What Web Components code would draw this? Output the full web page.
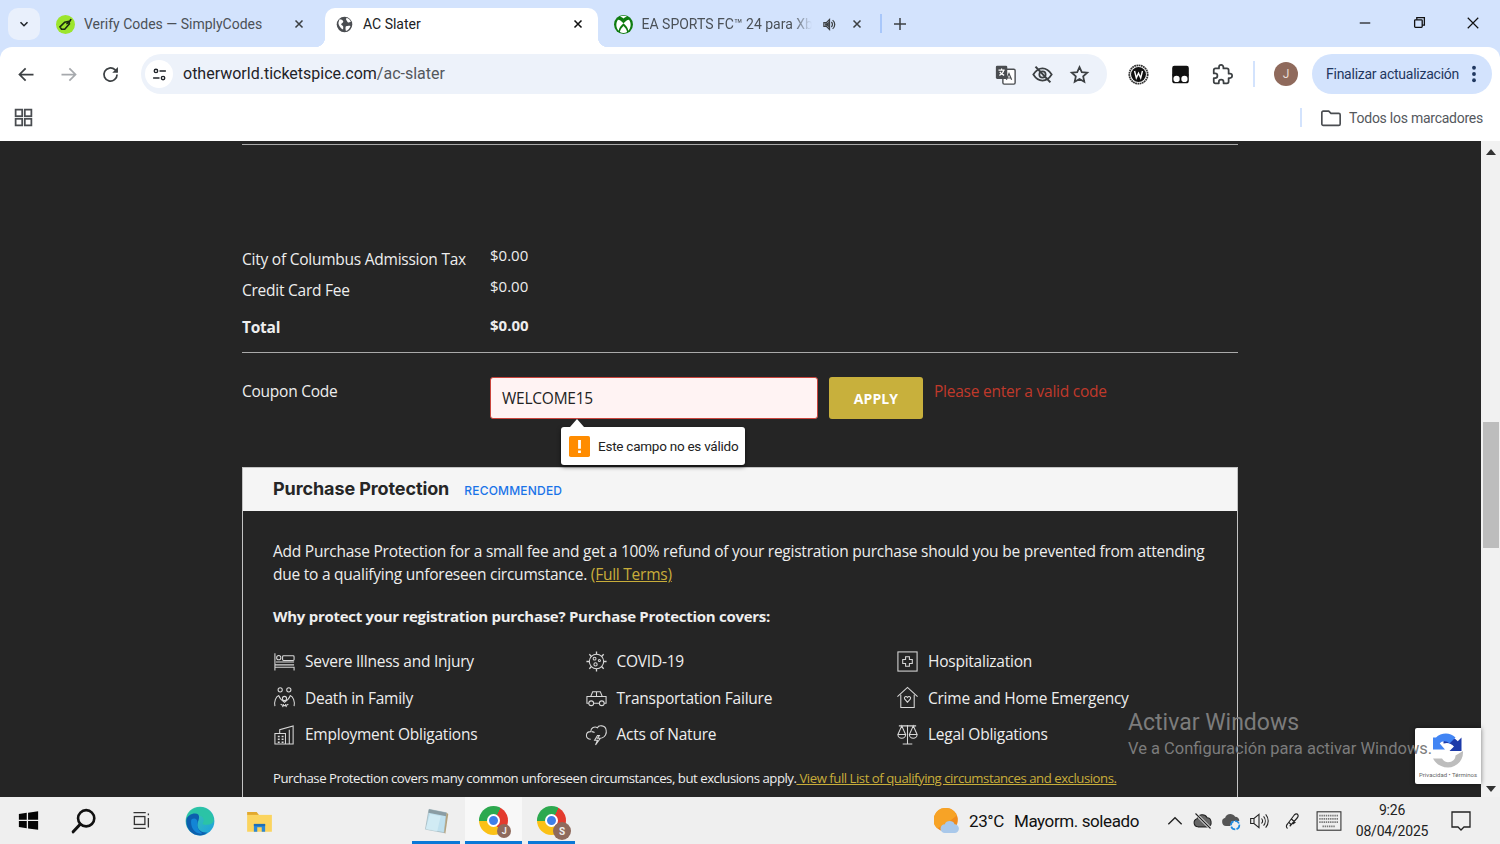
<!DOCTYPE html>
<html lang="es">
<head>
<meta charset="utf-8">
<title>AC Slater</title>
<style>
html,body{margin:0;padding:0;height:100%;overflow:hidden}
body{width:1500px;height:844px;display:flex;flex-direction:column;font-family:"Open Sans","Noto Sans",sans-serif;position:relative;background:#d3e3fd}
</style>
</head>
<body>
<tab-strip></tab-strip>
<tool-bar></tool-bar>
<bookmarks-bar></bookmarks-bar>
<page-view>
  <fee-row label="City of Columbus Admission Tax" value="$0.00" style="margin-top:103px;height:31px"></fee-row>
  <fee-row label="Credit Card Fee" value="$0.00" style="height:37px"></fee-row>
  <fee-row label="Total" value="$0.00" strong style="height:36px"></fee-row>
  <coupon-row></coupon-row>
  <protection-card>
    <coverage-item icon="bed">Severe Illness and Injury</coverage-item>
    <coverage-item icon="virus">COVID-19</coverage-item>
    <coverage-item icon="hospital">Hospitalization</coverage-item>
    <coverage-item icon="family">Death in Family</coverage-item>
    <coverage-item icon="car">Transportation Failure</coverage-item>
    <coverage-item icon="home">Crime and Home Emergency</coverage-item>
    <coverage-item icon="office">Employment Obligations</coverage-item>
    <coverage-item icon="storm">Acts of Nature</coverage-item>
    <coverage-item icon="scale">Legal Obligations</coverage-item>
  </protection-card>
</page-view>
<task-bar></task-bar>

<script>
"use strict";

// dibujos de los iconos, todos en un viewBox de 24
const ICONS = {
  back: '<path d="M20 12H5M11 5l-7 7 7 7" fill="none" stroke="#3c4043" stroke-width="2"/>',
  forward: '<path d="M4 12h15M13 5l7 7-7 7" fill="none" stroke="#a6a9ad" stroke-width="2"/>',
  reload: '<path d="M19.5 12a7.5 7.5 0 1 1-2.4-5.5L19.5 9" fill="none" stroke="#3c4043" stroke-width="2"/><path d="M20.5 3.5V10H14z" fill="#3c4043"/>',
  tune: '<g fill="none" stroke="#1f2328" stroke-width="2"><circle cx="7" cy="7" r="2.4"/><path d="M12 7h9M3 17h9"/><circle cx="17" cy="17" r="2.4"/></g>',
  close: '<path d="M6 6l12 12M18 6L6 18" fill="none" stroke="currentColor" stroke-width="2.6"/>',
  plus: '<path d="M12 4v16M4 12h16" fill="none" stroke="#3c4043" stroke-width="2"/>',
  chevron: '<path d="M6 9l6 6 6-6" fill="none" stroke="#1f2328" stroke-width="2.6"/>',
  globe: '<circle cx="12" cy="12" r="11" fill="#4a4d51"/><path d="M5 4.5c3 0 4 1 5 2.500s-1 3-2 3.500-1 2 1 3 1 4 1 5.500C6 17 3 12 3.500 9zM15 2.500c3 1 5 3 6 5.500l-3 1c-2 .5-2-1.500-3-2.500s-1-3 0-4zM14 14.500c2-1 5-1 6.500-.5-1 3-3 6-6.500 7-.5-2-1-5 0-6.500z" fill="#fff"/>',
  simply: '<circle cx="12" cy="12" r="12" fill="#9ce52d"/><path d="M5 15l6-6 5-1 1 3-6 7H7z" fill="none" stroke="#1c2b10" stroke-width="2"/><path d="M13 11c3-1 5-3 6-6" fill="none" stroke="#1c2b10" stroke-width="2"/>',
  xbox: '<circle cx="12" cy="12" r="12" fill="#107c10"/><path d="M12 10.500C9.500 8 7.500 6 5 6c-3.500 5-2 11 1 14 0-3 3-7 6-9.500zM12 10.500C14.500 8 16.500 6 19 6c3.500 5 2 11-1 14 0-3-3-7-6-9.500zM12 14c-2.500 2.500-4 4.500-4.500 7.500 3 1.500 6 1.500 9 0-.5-3-2-5-4.500-7.500zM7.500 2c3-1.500 6-1.500 9 0-1.500.3-3 1-4.500 2.500C10.500 3 9 2.300 7.500 2z" fill="#fff"/>',
  sound: '<path d="M3 9v6h4l5 5V4L7 9z" fill="none" stroke="#3c4043" stroke-width="2"/><path d="M5 10h3l3-3v10l-3-3H5z" fill="#3c4043"/><path d="M15 8a5.500 5.500 0 0 1 0 8M17 5a9 9 0 0 1 0 14" fill="none" stroke="#3c4043" stroke-width="2"/>',
  minimize: '<path d="M3 12h18" stroke="#111" stroke-width="2"/>',
  restore: '<g fill="none" stroke="#111" stroke-width="2.4"><rect x="3" y="7" width="14" height="14" rx="1.500"/><path d="M7 7V3h14v14h-4"/></g>',
  winclose: '<path d="M3 3l18 18M21 3L3 21" fill="none" stroke="#111" stroke-width="2"/>',
  translate: '<rect x="9" y="6" width="14" height="17" rx="1.500" fill="#fff" stroke="#4a4d51" stroke-width="1.600"/><rect x="1" y="2" width="13" height="15" rx="1.500" fill="#4a4d51"/><path d="M4 7h7M7.500 5v2M10 7c-.5 3-3 5-5 6M5.500 9c1 2 3 3 5 4" fill="none" stroke="#fff" stroke-width="1.300"/><path d="M13 18l3-7 3 7M14 16h4" fill="none" stroke="#4a4d51" stroke-width="1.400"/>',
  eyeoff: '<path d="M1.500 12C5 6.500 8 5 12 5s7 1.500 10.500 7C19 17.500 16 19 12 19s-7-1.500-10.500-7z" fill="none" stroke="#3c4043" stroke-width="2"/><circle cx="12" cy="12" r="3.600" fill="none" stroke="#3c4043" stroke-width="2"/><path d="M4 3l17 18" stroke="#3c4043" stroke-width="2.400"/>',
  star: '<path d="M12 3.500l2.600 5.800 6.300.7-4.700 4.200 1.300 6.200-5.500-3.200-5.500 3.200 1.300-6.200L3.100 10l6.300-.7z" fill="none" stroke="#3c4043" stroke-width="2"/>',
  wext: '<circle cx="12" cy="12" r="10.500" fill="#fff" stroke="#333" stroke-width="2" stroke-dasharray="2 .6"/><circle cx="12" cy="12" r="8.500" fill="#111"/><path d="M7.500 8l2 8 2.500-5.500 2.500 5.500 2-8" fill="none" stroke="#fff" stroke-width="1.600"/>',
  tamper: '<path d="M5 2h14a2.500 2.500 0 0 1 2.500 2.500V13h-19V4.500A2.500 2.500 0 0 1 5 2z" fill="#111"/><path d="M2.500 12h19v7a3 3 0 0 1-3 3H5.500a3 3 0 0 1-3-3z" fill="#111"/><circle cx="7.500" cy="17" r="3.600" fill="#fff"/><circle cx="16.500" cy="17" r="3.600" fill="#fff"/>',
  puzzle: '<path d="M20.500 11H19V7a2 2 0 0 0-2-2h-4V3.500a2.500 2.500 0 0 0-5 0V5H4a2 2 0 0 0-2 2v3.800h1.500a2.700 2.700 0 0 1 0 5.400H2V20a2 2 0 0 0 2 2h3.800v-1.500a2.700 2.700 0 0 1 5.400 0V22H17a2 2 0 0 0 2-2v-4h1.500a2.500 2.500 0 0 0 0-5z" fill="none" stroke="#3c4043" stroke-width="2" stroke-linejoin="round"/>',
  dots: '<g fill="#1f3760"><circle cx="12" cy="4.500" r="2.300"/><circle cx="12" cy="12" r="2.300"/><circle cx="12" cy="19.500" r="2.300"/></g>',
  apps: '<g fill="none" stroke="#4a4d51" stroke-width="2"><rect x="3" y="3" width="7.500" height="7.500"/><rect x="13.500" y="3" width="7.500" height="7.500"/><rect x="3" y="13.500" width="7.500" height="7.500"/><rect x="13.500" y="13.500" width="7.500" height="7.500"/></g>',
  folder: '<path d="M2 6a1.500 1.500 0 0 1 1.500-1.500h6L12 7h8.500A1.500 1.500 0 0 1 22 8.500v10a1.500 1.500 0 0 1-1.500 1.500h-17A1.500 1.500 0 0 1 2 18.500z" fill="none" stroke="#4a4d51" stroke-width="1.800"/>',
  bed: '<g fill="none" stroke="#d8d8d8" stroke-width="1.100"><path d="M2 3.500v18M2 18h20v3.500M2 15.500h20"/><circle cx="6" cy="8" r="2.200"/><rect x="10" y="6" width="12" height="5" rx="1"/><path d="M3 12.500h19"/></g>',
  virus: '<g fill="none" stroke="#d8d8d8" stroke-width="1.100"><circle cx="12" cy="12" r="7.500"/><circle cx="10" cy="9" r="1.500"/><circle cx="15" cy="11" r="1.100"/><circle cx="11" cy="15" r="1.700"/><path d="M12 1.500v3M12 19.500v3M1.500 12h3M19.500 12h3M4.500 4.500l2.200 2.200M17.300 17.300l2.200 2.200M19.500 4.500l-2.200 2.200M6.700 17.300l-2.200 2.200" stroke-width="1.400"/></g>',
  hospital: '<g fill="none" stroke="#d8d8d8" stroke-width="1.100"><rect x="2" y="2" width="20" height="20"/><path d="M10 7h4v3h3v4h-3v3h-4v-3H7v-4h3z"/></g>',
  family: '<g fill="none" stroke="#d8d8d8" stroke-width="1.100"><circle cx="7.500" cy="4" r="2.200"/><circle cx="16.500" cy="4" r="2.200"/><circle cx="12" cy="13" r="2.200"/><path d="M2 21c-1-5 1-10 4-11 1 3 3 5 6 7 3-2 5-4 6-7 3 1 5 6 4 11M8 19c2 2 6 2 8 0M10 22l1-3M14 22l-1-3"/></g>',
  car: '<g fill="none" stroke="#d8d8d8" stroke-width="1.100"><path d="M6 11l2-5h8l2 5M1.500 11h21M2 11v7h2M22 11v7h-2M9 18h6M12 6v5"/><circle cx="6.500" cy="18" r="2.500"/><circle cx="17.500" cy="18" r="2.500"/></g>',
  home: '<g fill="none" stroke="#d8d8d8" stroke-width="1.100"><path d="M1.500 11L12 1.500 22.500 11M5 9v13.500h14V9"/><path d="M12 17l-3-3.500c-1-2 1.500-3.500 3-1.500 1.500-2 4-.5 3 1.500z"/></g>',
  office: '<g fill="none" stroke="#d8d8d8" stroke-width="1.100"><path d="M2 11h11v11H2zM7 11V7l14-4v19h-8M17 7v15"/><path d="M5 14h2M9 14h2M5 17h2M9 17h2M5 20h2M9 20h2" stroke-width="1.500"/></g>',
  storm: '<g fill="none" stroke="#d8d8d8" stroke-width="1.100"><path d="M6 17c-6 0-6-8 0-8 0-4 4-6 7-4 1-3 8-3 9 2 1 4-1 8-5 9M7 9c1 0 2 .5 3 1"/><path d="M13 13l-3 5h3l-2 5 5-7h-3l2-3z"/></g>',
  scale: '<g fill="none" stroke="#d8d8d8" stroke-width="1.100"><path d="M12 2v20M7 22h10M3 3h18M6 3l-4 9h8zM18 3l-4 9h8zM2 12a4 4 0 0 0 8 0M14 12a4 4 0 0 0 8 0"/></g>',
  windows: '<path d="M1 4.500l9-1.300V11H1zM11.500 3L23 1.300V11H11.500zM1 12.500h9v8.300l-9-1.300zM11.500 12.500H23v10.200L11.500 21z" fill="#050505"/>',
  search: '<circle cx="14" cy="9.500" r="7.500" fill="none" stroke="#111" stroke-width="2.400"/><path d="M8.500 15L2 22" stroke="#111" stroke-width="2.800" stroke-linecap="round"/>',
  taskview: '<g fill="none" stroke="#333" stroke-width="1.500"><rect x="5" y="7.500" width="12" height="9"/><path d="M4 3h14M4 21h14M21 4v2M21 9v11"/></g>',
  edge: '<defs><linearGradient id="e1" x1="0" y1="0" x2="1" y2="1"><stop offset="0" stop-color="#41d2a0"/><stop offset="1" stop-color="#1b9de2"/></linearGradient></defs><circle cx="12" cy="12" r="11.500" fill="url(#e1)"/><path d="M1 12C1 5 7 1 12 1c6 0 11 5 11 10 0 3-3 4-6 4-2 0-3-.5-3-1.500 2-1 1-6-3-6C6 7.500 1 8 1 12z" fill="#2bc3a6"/><path d="M1 12c0-4 4-6 7-6 5 0 3 5 2 8-1 4 3 8 8 7-2 2-4 2.500-6 2.500C5 23.500 1 18 1 12z" fill="#0c5fae"/><path d="M5 11c2-2 5-1 5 2-.5 3 0 6 4 9-6 1-10-5-9-11z" fill="#1385d5"/>',
  explorer: '<path d="M1 4.500h8.500l2 2.500H1z" fill="#e2a92f"/><path d="M1 7h22v15H1z" fill="#fbd45f"/><path d="M7 22v-7h10v7h-3v-4h-4v4z" fill="#2b87d6"/><path d="M7 15h10v2H7z" fill="#1d6fb8"/>',
  notepad: '<path d="M6 2l15 3-2 17-16-3z" fill="#bfe0ee" stroke="#9db1b8" stroke-width=".6"/><path d="M6 2l15 3-.4 3L5.500 5z" fill="#8a9ca3"/><path d="M19 22l2-17 1.500 1-2.500 17z" fill="#b3a27e"/><path d="M3 19l4-13 9 2-3 13z" fill="#d9eff7" opacity=".7"/>',
  weather: '<circle cx="11" cy="11" r="11" fill="#f08c1e"/><path d="M11 0a11 11 0 0 1 10 7L12 14 3 19A11 11 0 0 1 11 0z" fill="#f7a326"/><path d="M10 23a4 4 0 0 1 0-8c1-4 8-4 9 0a4 4 0 0 1 0 8z" fill="#a9c8ea"/>',
  up: '<path d="M4 16l8-8 8 8" fill="none" stroke="#222" stroke-width="1.600"/>',
  cloudoff: '<path d="M6 19a5 5 0 0 1-1-9.800C6 4 14 2.500 17 8c5 0 7 9 1 11z" fill="#666" stroke="#222" stroke-width="1.300"/><path d="M3 3l18 18" stroke="#f0f0f0" stroke-width="3.400"/><path d="M3 3l18 18" stroke="#222" stroke-width="1.300"/>',
  cloudsync: '<path d="M6 18a5 5 0 0 1-1-9.800C6 3 14 1.500 17 7c3 0 5 2 5 5H13l-2 6z" fill="#555"/><circle cx="17" cy="17" r="5" fill="none" stroke="#1d8ae0" stroke-width="2" stroke-dasharray="6 1.500"/>',
  volume: '<path d="M2 9v6h4l6 5V4L6 9zM6 9v6" fill="none" stroke="#222" stroke-width="1.300"/><path d="M15 9a4.500 4.500 0 0 1 0 6M17.500 6.500a8.500 8.500 0 0 1 0 11M20 4a12 12 0 0 1 0 16" fill="none" stroke="#222" stroke-width="1.300"/>',
  pen: '<path d="M6 22c-2-2-2-4 0-6L15 4c2-2 4-2 5 0s0 3-2 5L9 19M11 9l5 5-3 2M8 14l3 3" fill="none" stroke="#222" stroke-width="1.500"/>',
  keyboard: '<rect x="1" y="3.500" width="22" height="17" fill="none" stroke="#333" stroke-width="1"/><path d="M3 7h18M3 10h18M3 13h18M6 17h12" stroke="#777" stroke-width="1.500" stroke-dasharray="1.300 .7"/>',
  notify: '<path d="M3 3h18v15h-6l-3 3-3-3H3z" fill="none" stroke="#222" stroke-width="1.300"/>',
  warning: '<rect width="24" height="24" rx="2" fill="#ff8c00"/><path d="M12 4.500v10M12 16.500v3" stroke="#fff" stroke-width="3.200"/>',
  recaptcha: '<path d="M21 3v9h-8l3-3c-2-2-4-3-7-2L9 3c3-1 7-.5 9.500 2.500z" fill="#1c3aa9"/><path d="M4 3c3-3 9-4 13 0l-4 4C11 5 8 5 6.500 7L10 11H2V3z" fill="#4285f4"/><path d="M22 12c.5 7-5 11-10 11-4 0-8-2-10-6h6c1 2 3 2.500 4 2.500 3 0 5-2 5-4.500z" fill="#bdbdbd"/>'
};

class UiIcon extends HTMLElement {
  connectedCallback() {
    const size = this.getAttribute('size') || 24;
    this.attachShadow({ mode: 'open' }).innerHTML = `
      <style>:host{display:inline-flex;flex:none;width:${size}px;height:${size}px}svg{width:100%;height:100%;display:block}</style>
      <svg viewBox="0 0 24 24">${ICONS[this.getAttribute('name')] || ''}</svg>`;
  }
}
customElements.define('ui-icon', UiIcon);

class BrowserTab extends HTMLElement {
  connectedCallback() {
    const active = this.hasAttribute('active');
    this.attachShadow({ mode: 'open' }).innerHTML = `
      <style>
        :host{display:flex;align-items:center;height:39px;position:relative;box-sizing:border-box;padding-bottom:7px !important;font:14px Roboto,"Noto Sans",sans-serif;color:${active ? '#202124' : '#4b5157'};${active ? 'background:#fff;border-radius:10px 10px 0 0;' : ''}}
        .title{white-space:nowrap;overflow:hidden;flex:1;margin-left:9px;-webkit-mask-image:${this.hasAttribute('fade') ? 'linear-gradient(90deg,#000 88%,transparent)' : 'none'}}
        .x{color:${active ? '#111' : '#3c4043'};display:flex}
        ${active ? `:host::before,:host::after{content:"";position:absolute;bottom:0;width:10px;height:10px;background:radial-gradient(circle at var(--c),transparent 10px,#fff 10.500px)}
        :host::before{left:-10px;--c:0 0}:host::after{right:-10px;--c:100% 0}` : ''}
      </style>
      <slot name="icon"></slot><span class="title"><slot></slot></span><slot name="extra"></slot><span class="x"><ui-icon name="close" size="14"></ui-icon></span>`;
  }
}
customElements.define('browser-tab', BrowserTab);

class TabStrip extends HTMLElement {
  constructor() {
    super();
    this.attachShadow({ mode: 'open' }).innerHTML = `
      <style>
        :host{display:flex;align-items:flex-end;height:47px;flex:none;background:#d3e3fd;box-sizing:border-box;padding-left:8px}
        .more{width:32px;height:32px;border-radius:10px;background:#e9f0fc;display:flex;align-items:center;justify-content:center;align-self:flex-start;margin-top:8px;margin-right:16px}
        browser-tab{flex:none}
        .t1{width:269px;padding-right:19px}
        .t2{width:273px;padding:0 13px 0 11px}
        .t3{width:282px;padding:0 16px 0 15.500px}
        .sep{width:2px;height:19px;background:#a8c7fa;align-self:flex-start;margin-top:14px;margin-left:0}
        .plus{align-self:flex-start;margin:15px 0 0 9px}
        .win{margin-left:auto;display:flex;align-self:flex-start;margin-top:16px}
        .win span{width:54px;display:flex;justify-content:center}
      </style>
      <span class="more"><ui-icon name="chevron" size="14"></ui-icon></span>
      <browser-tab class="t1"><ui-icon slot="icon" name="simply" size="19"></ui-icon>Verify Codes — SimplyCodes</browser-tab>
      <browser-tab class="t2" active><ui-icon slot="icon" name="globe" size="17"></ui-icon><span style="margin-left:1px">AC Slater</span></browser-tab>
      <browser-tab class="t3" fade><ui-icon slot="icon" name="xbox" size="19"></ui-icon>EA SPORTS FC™ 24 para Xbox<ui-icon slot="extra" name="sound" size="15" style="margin:0 13.500px 0 10px"></ui-icon></browser-tab>
      <span class="sep"></span>
      <span class="plus"><ui-icon name="plus" size="18"></ui-icon></span>
      <span class="win"><span><ui-icon name="minimize" size="14"></ui-icon></span><span><ui-icon name="restore" size="13"></ui-icon></span><span><ui-icon name="winclose" size="14"></ui-icon></span></span>`;
  }
}
customElements.define('tab-strip', TabStrip);

class ToolBar extends HTMLElement {
  constructor() {
    super();
    this.attachShadow({ mode: 'open' }).innerHTML = `
      <style>
        :host{display:flex;align-items:center;height:47px;flex:none;background:#fff;border-radius:12px 12px 0 0;padding:7px 7px 0 16px;box-sizing:border-box;position:relative}
        .nav{display:flex;gap:21px;margin-right:20px}
        .omni{width:966px;height:40px;border-radius:20px;background:#edf2fa;display:flex;align-items:center;box-sizing:border-box;padding:0 17px 0 4px;flex:none}
        .site{width:28px;height:28px;border-radius:50%;background:#fff;display:flex;align-items:center;justify-content:center;margin-right:10px}
        .url{font:16px Roboto,"Noto Sans",sans-serif;color:#1f2328;flex:1;white-space:nowrap;margin-top:-1px}
        .url span{color:#54585d}
        .omni ui-icon+ui-icon{margin-left:16px}
        .ext{display:flex;align-items:center;gap:21px;margin-left:21px}
        .sep{width:2px;height:26px;background:#d3e3fd;margin:0 19px 0 20px}
        .avatar{width:24px;height:24px;border-radius:50%;background:#8f6a5c;color:#e8dcd6;font:12px Roboto,sans-serif;display:flex;align-items:center;justify-content:center;margin-right:14px;flex:none}
        .pill{width:180px;height:40px;border-radius:20px;background:#d3e3fd;color:#1f3760;font:14px Roboto,"Noto Sans",sans-serif;letter-spacing:-.25px;display:flex;align-items:center;box-sizing:border-box;padding-left:14px;white-space:nowrap;flex:none}
        .pill ui-icon{position:absolute;left:1464px}
      </style>
      <span class="nav"><ui-icon name="back" size="21"></ui-icon><ui-icon name="forward" size="21"></ui-icon><ui-icon name="reload" size="21"></ui-icon></span>
      <div class="omni">
        <span class="site"><ui-icon name="tune" size="17"></ui-icon></span>
        <span class="url">otherworld.ticketspice.com<span>/ac-slater</span></span>
        <ui-icon name="translate" size="21"></ui-icon><ui-icon name="eyeoff" size="21"></ui-icon><ui-icon name="star" size="21"></ui-icon>
      </div>
      <span class="ext"><ui-icon name="wext" size="21"></ui-icon><ui-icon name="tamper" size="21"></ui-icon><ui-icon name="puzzle" size="21"></ui-icon></span>
      <span class="sep"></span>
      <span class="avatar">J</span>
      <span class="pill">Finalizar actualización<ui-icon name="dots" size="20"></ui-icon></span>`;
  }
}
customElements.define('tool-bar', ToolBar);

class BookmarksBar extends HTMLElement {
  constructor() {
    super();
    this.attachShadow({ mode: 'open' }).innerHTML = `
      <style>
        :host{display:flex;align-items:center;height:47px;flex:none;background:#fff;box-sizing:border-box;padding:0 17px 0 13px;font:14px Roboto,"Noto Sans",sans-serif;letter-spacing:-.25px;color:#54585d}
        .sep{width:2px;height:19px;background:#d3e3fd;margin-left:auto;margin-right:18px}
        ui-icon[name=folder]{margin-right:7px}
      </style>
      <ui-icon name="apps" size="21"></ui-icon>
      <span class="sep"></span>
      <ui-icon name="folder" size="22"></ui-icon><span>Todos los marcadores</span>`;
  }
}
customElements.define('bookmarks-bar', BookmarksBar);

class FeeRow extends HTMLElement {
  connectedCallback() {
    const strong = this.hasAttribute('strong');
    this.attachShadow({ mode: 'open' }).innerHTML = `
      <style>
        :host{display:grid;grid-template-columns:248px 1fr;font-size:15.500px;letter-spacing:-.24px;color:#eee;font-weight:${strong ? 700 : 400};box-sizing:border-box}
        .v{margin-top:${strong ? -1 : -3}px;font-size:15px;letter-spacing:0}
      </style>
      <span>${this.getAttribute('label')}</span><span class="v">${this.getAttribute('value')}</span>`;
  }
}
customElements.define('fee-row', FeeRow);

class CouponRow extends HTMLElement {
  constructor() {
    super();
    this.attachShadow({ mode: 'open' }).innerHTML = `
      <style>
        :host{display:flex;border-top:1px solid #aaa;padding-top:24px;position:relative;color:#eee;font-size:15.500px;letter-spacing:-.24px}
        .lbl{width:248px;padding-top:3px}
        .field{width:328px;height:42px;box-sizing:border-box;background:#fff3f3;border:1px solid #c9443c;border-radius:3px;color:#222;font-size:15.500px;display:flex;align-items:center;padding-left:11px}
        .apply{width:94px;height:42px;background:#c8b03c;border-radius:3px;color:#fff;font-weight:700;font-size:14px;display:flex;align-items:center;justify-content:center;margin-left:11px;letter-spacing:.1px}
        .err{color:#c0392b;margin-left:11px;padding-top:3px;font-size:15.500px}
        .tip{position:absolute;left:319px;top:74px;width:184px;height:38px;box-sizing:border-box;background:#fff;border-radius:3px;box-shadow:0 2px 4px rgba(0,0,0,.55);display:flex;align-items:center;padding-left:8px;color:#222;font:13.500px Roboto,sans-serif;letter-spacing:-.25px;z-index:2;white-space:nowrap}
        .tip::before{content:"";position:absolute;left:9px;top:-8px;border:7px solid transparent;border-top:0;border-bottom:8px solid #fff}
        .tip ui-icon{margin-right:8px}
      </style>
      <span class="lbl">Coupon Code</span>
      <span class="field">WELCOME15</span>
      <span class="apply">APPLY</span>
      <span class="err">Please enter a valid code</span>
      <div class="tip"><ui-icon name="warning" size="21"></ui-icon>Este campo no es válido</div>`;
  }
}
customElements.define('coupon-row', CouponRow);

class CoverageItem extends HTMLElement {
  connectedCallback() {
    this.attachShadow({ mode: 'open' }).innerHTML = `
      <style>
        :host{display:flex;align-items:center;gap:9px;height:36.500px;font-size:15.500px;letter-spacing:-.24px;color:#eee}
      </style>
      <ui-icon name="${this.getAttribute('icon')}" size="23"></ui-icon><slot></slot>`;
  }
}
customElements.define('coverage-item', CoverageItem);

class ProtectionCard extends HTMLElement {
  constructor() {
    super();
    this.attachShadow({ mode: 'open' }).innerHTML = `
      <style>
        :host{display:block;margin-top:48px;border:1px solid #c4c4c4;border-bottom:0;color:#eee;flex:1}
        .head{height:43px;background:#f5f5f5;display:flex;align-items:center;padding:0 0 2px 30px;box-sizing:border-box}
        .head b{font:700 18px Inter,"Open Sans",sans-serif;color:#262626;letter-spacing:-.1px}
        .head span{font:500 12px Inter,"Open Sans",sans-serif;color:#1a73e8;margin-left:15px;margin-top:3px;letter-spacing:.2px}
        .body{padding:29px 30px 0;font-size:15.500px;letter-spacing:-.24px}
        p{margin:0;line-height:23px}
        a{color:#c8ad3a;text-decoration:underline}
        .why{font-weight:700;margin-top:19px;font-size:15px;letter-spacing:-.28px}
        .grid{display:grid;grid-template-columns:311.500px 311.500px 1fr;margin-top:15px}
        .note{font-size:13.200px;margin-top:14px;letter-spacing:-.47px;white-space:nowrap}
      </style>
      <div class="head"><b>Purchase Protection</b><span>RECOMMENDED</span></div>
      <div class="body">
        <p>Add Purchase Protection for a small fee and get a 100% refund of your registration purchase should you be prevented from attending<br>due to a qualifying unforeseen circumstance. <a>(Full Terms)</a></p>
        <p class="why">Why protect your registration purchase? Purchase Protection covers:</p>
        <div class="grid"><slot></slot></div>
        <p class="note">Purchase Protection covers many common unforeseen circumstances, but exclusions apply.<a> View full List of qualifying circumstances and exclusions.</a></p>
      </div>`;
  }
}
customElements.define('protection-card', ProtectionCard);

class PageView extends HTMLElement {
  constructor() {
    super();
    this.attachShadow({ mode: 'open' }).innerHTML = `
      <style>
        :host{display:flex;flex:1;min-height:0;background:#252525;position:relative;overflow:hidden}
        .col{width:996px;margin-left:242px;display:flex;flex-direction:column;border-top:1px solid #aaa;margin-top:3px;box-sizing:border-box}
        .bar{width:19px;margin-left:auto;background:#f1f1f1;position:relative;flex:none}
        .thumb{position:absolute;left:2px;right:1px;top:281px;height:126px;background:#bdbdbd}
        .bar i{position:absolute;left:5px;border:5px solid transparent}
        .bar .u{top:8px;border-top:0;border-bottom:6px solid #333}
        .bar .d{bottom:5px;border-bottom:0;border-top:6px solid #333}
        .cap{position:absolute;right:19px;top:587px;width:66px;height:56px;background:#fff;border-radius:2px 0 0 2px;box-shadow:0 0 5px rgba(0,0,0,.5);display:flex;flex-direction:column;align-items:center;padding-top:5px;box-sizing:border-box;font:6px Roboto,sans-serif;color:#666}
        .cap ui-icon{margin-bottom:2px}
        .activate{position:absolute;left:1128px;top:567px;color:#7c7c7c;font:16.500px Roboto,"Noto Sans",sans-serif;white-space:nowrap}
        .activate b{display:block;font-weight:400;font-size:23px;line-height:30px}
        .activate span{display:block;line-height:24px;margin-top:-1px}
      </style>
      <div class="col"><slot></slot></div>
      <div class="bar"><i class="u"></i><div class="thumb"></div><i class="d"></i></div>
      <div class="cap"><ui-icon name="recaptcha" size="36"></ui-icon>Privacidad • Términos</div>
      <div class="activate"><b>Activar Windows</b><span>Ve a Configuración para activar Windows.</span></div>`;
  }
}
customElements.define('page-view', PageView);

class TaskApp extends HTMLElement {
  connectedCallback() {
    const w = this.getAttribute('w') || 56;
    const on = this.hasAttribute('on');
    const act = this.hasAttribute('active');
    this.attachShadow({ mode: 'open' }).innerHTML = `
      <style>
        :host{display:flex;align-items:center;justify-content:center;width:${w}px;height:47px;flex:none;position:relative;box-sizing:border-box;background:${act ? '#f8f8f8' : 'transparent'}}
        :host::after{content:"";position:absolute;left:0;right:0;bottom:0;height:3px;background:${on ? '#0a78d7' : 'transparent'}}
      </style><slot></slot>`;
  }
}
customElements.define('task-app', TaskApp);

class ChromeLogo extends HTMLElement {
  connectedCallback() {
    const letter = this.getAttribute('letter');
    const big = this.hasAttribute('big');
    this.attachShadow({ mode: 'open' }).innerHTML = `
      <style>
        :host{display:block;width:29px;height:29px;position:relative}
        .c{position:absolute;inset:0;border-radius:50%;background:conic-gradient(from 30deg,#e33b2e 0 120deg,#fbc116 120deg 240deg,#2da94f 240deg 360deg);}
        .c::after{content:"";position:absolute;inset:8px;border-radius:50%;background:#3f7fe8;border:2px solid #fff;box-sizing:content-box;width:9px;height:9px}
        .b{position:absolute;border-radius:50%;background:#8f6a5c;color:#eee;font:700 ${big ? 10 : 9}px Roboto,sans-serif;display:flex;align-items:center;justify-content:center;right:${big ? -5 : -3}px;bottom:${big ? -5 : -3}px;width:${big ? 18 : 14}px;height:${big ? 18 : 14}px}
      </style>
      <div class="c"></div><div class="b">${letter}</div>`;
  }
}
customElements.define('chrome-logo', ChromeLogo);

class TaskBar extends HTMLElement {
  constructor() {
    super();
    this.attachShadow({ mode: 'open' }).innerHTML = `
      <style>
        :host{display:flex;align-items:center;height:47px;flex:none;background:#efefef;font:17px Roboto,"Noto Sans",sans-serif;letter-spacing:-.4px;color:#111}
        .w{display:flex;align-items:center;gap:10px;width:227px;white-space:nowrap;flex:none}
        .w ui-icon{margin-right:-1px}
        .tray{display:flex;align-items:center;flex:none}
        .tray span{display:flex;justify-content:center;flex:none}
        .clock{font-size:14px;letter-spacing:-.2px;line-height:21px;text-align:center;width:90px;color:#222;flex:none}
      </style>
      <task-app><ui-icon name="windows" size="21"></ui-icon></task-app>
      <task-app><ui-icon name="search" size="26"></ui-icon></task-app>
      <task-app><ui-icon name="taskview" size="21"></ui-icon></task-app>
      <task-app style="margin-left:4px"><ui-icon name="edge" size="30"></ui-icon></task-app>
      <task-app style="margin-left:3px"><ui-icon name="explorer" size="27"></ui-icon></task-app>
      <task-app w="48" on style="margin-left:125px"><ui-icon name="notepad" size="28"></ui-icon></task-app>
      <task-app w="57" on active style="margin-left:5px"><chrome-logo letter="J"></chrome-logo></task-app>
      <task-app w="47" on style="margin-left:6px"><chrome-logo letter="S" big></chrome-logo></task-app>
      <span style="flex:1"></span>
      <div class="w"><ui-icon name="weather" size="26"></ui-icon><span>23°C</span><span>Mayorm. soleado</span></div>
      <div class="tray">
        <span style="width:28px"><ui-icon name="up" size="20"></ui-icon></span>
        <span style="width:28px"><ui-icon name="cloudoff" size="20"></ui-icon></span>
        <span style="width:28px"><ui-icon name="cloudsync" size="20"></ui-icon></span>
        <span style="width:28px"><ui-icon name="volume" size="20"></ui-icon></span>
        <span style="width:38px"><ui-icon name="pen" size="18"></ui-icon></span>
        <span style="width:36px"><ui-icon name="keyboard" size="26"></ui-icon></span>
      </div>
      <div class="clock">9:26<br>08/04/2025</div>
      <span style="width:46px;margin-left:1px;margin-right:16px;display:flex;justify-content:center"><ui-icon name="notify" size="24"></ui-icon></span>`;
  }
}
customElements.define('task-bar', TaskBar);
</script>
</body>
</html>
